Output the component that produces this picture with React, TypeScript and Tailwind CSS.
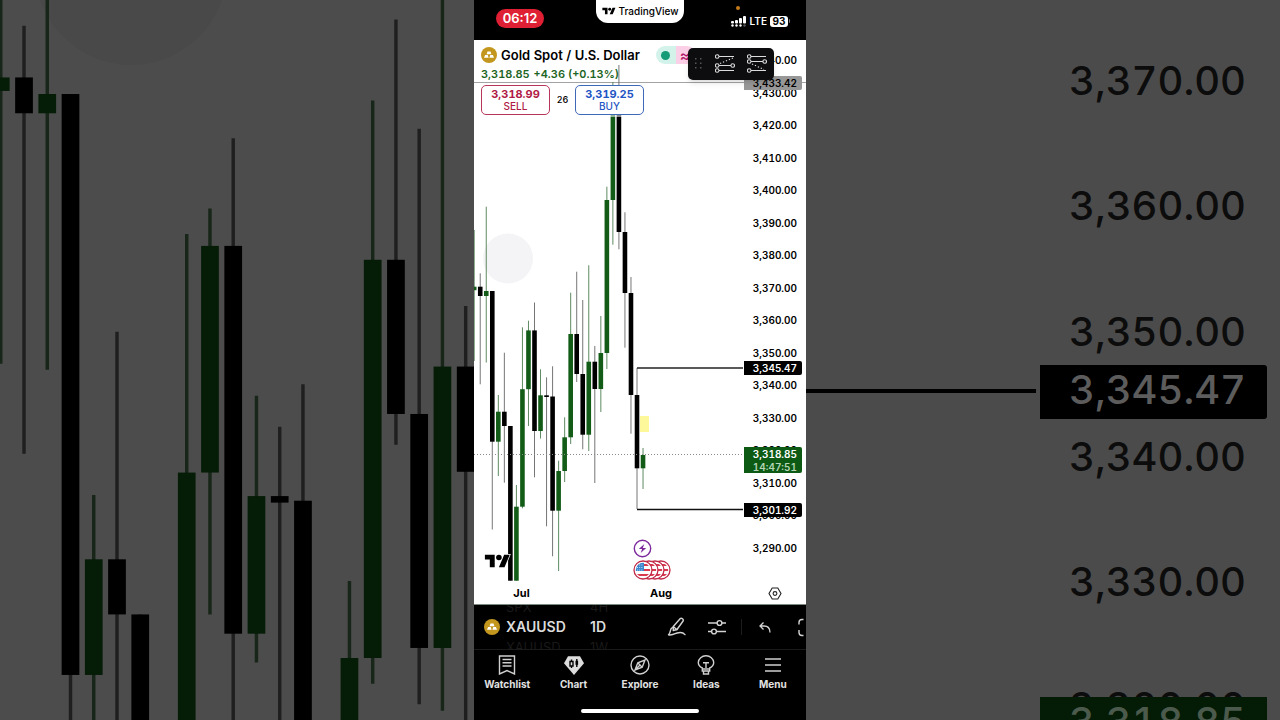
import React from "react";

type Candle = { up: boolean; high: number; top: number; bottom: number; low: number };

const c = (up: boolean, high: number, top: number, bottom: number, low: number): Candle => ({ up, high, top, bottom, low });

const CANDLES: Candle[] = [
  c(true, 230, 286.7, 290.2, 361),
  c(false, 273.3, 286.7, 296, 384.3),
  c(true, 206.7, 291, 296, 362.5),
  c(false, 291, 291, 441.7, 529.5),
  c(true, 395, 411.7, 441.7, 476),
  c(false, 352.7, 411.7, 426, 482.7),
  c(false, 426, 426, 580.7, 580.7),
  c(true, 485, 506.7, 580.7, 580.7),
  c(true, 327.3, 389.2, 506.7, 508.3),
  c(true, 320.7, 330.4, 389.2, 426),
  c(false, 302.5, 330.4, 431, 477.3),
  c(true, 369.3, 395.3, 431, 438.5),
  c(false, 377.3, 395.3, 397, 526.3),
  c(false, 366.3, 396.5, 510.7, 556.3),
  c(true, 460.7, 471, 510.7, 571),
  c(true, 417.3, 437.3, 471, 482),
  c(true, 292.7, 334, 437.3, 444),
  c(false, 271.7, 334, 374, 382),
  c(false, 300, 374, 434.7, 449.3),
  c(true, 265.3, 361.7, 434.7, 451),
  c(false, 346, 361.7, 389, 483),
  c(true, 316, 353, 389, 412),
  c(true, 186.7, 200, 353, 369),
  c(true, 82, 112, 200, 244.7),
  c(false, 65, 112, 232, 249.3),
  c(false, 212.3, 232, 293, 347.7),
  c(false, 277, 293, 395, 433.7),
  c(false, 368, 395, 468.3, 509),
  c(true, 448, 455, 468.3, 489),
];

const PRICES = [
  "3,440.00", "3,430.00", "3,420.00", "3,410.00", "3,400.00", "3,390.00", "3,380.00", "3,370.00",
  "3,360.00", "3,350.00", "3,340.00", "3,330.00", "3,320.00", "3,310.00", "3,300.00", "3,290.00",
];

function Candles() {
  return (
    <g>
      <circle cx="508" cy="258.5" r="25" fill="#f4f3f6" />
      {CANDLES.map((k, i) => {
        const x = 474.2 + i * 6.03;
        return (
          <g key={i}>
            <line x1={x} x2={x} y1={k.high} y2={k.low} stroke={k.up ? "#4c7d4f" : "#666"} strokeWidth="0.9" />
            <rect x={x - 2.3} y={k.top} width="4.6" height={k.bottom - k.top} fill={k.up ? "#125c17" : "#000"} />
          </g>
        );
      })}
      <rect x="640" y="416" width="9" height="16" fill="#fdf89a" />
    </g>
  );
}

function Backdrop({ side, children }: { side: "left" | "right"; children?: React.ReactNode }) {
  return (
    <div aria-hidden="true" className="grid h-screen min-w-0 flex-1 overflow-hidden bg-[#4b4b4b] [grid-template:100%/100%]">
      {side === "left" ? (
        <svg className="[grid-area:1/1] h-full w-full brightness-[0.3] bg-white" viewBox="474 266.6 122.96 186.8" preserveAspectRatio="xMinYMid slice">
          <Candles />
        </svg>
      ) : (
        children
      )}
    </div>
  );
}

function TVMark({ className, outline = false }: { className: string; outline?: boolean }) {
  return (
    <svg className={className} viewBox="-1 3 38 20" fill="#000" stroke={outline ? "#fff" : "none"} strokeWidth={outline ? 2 : 0} paintOrder="stroke">
      <path d="M14 22H7V11H0V4h14v18zM28 22h-8l7.5-18h8L28 22z" />
      <circle cx="20" cy="8" r="4" />
    </svg>
  );
}

function Coin({ className }: { className: string }) {
  return (
    <svg className={className} viewBox="0 0 18 18">
      <circle cx="9" cy="9" r="9" fill="#c3961d" />
      <g fill="#fff">
        <path d="M7.3 5.2h3.4l1 3H6.3z" />
        <path d="M4.6 9h3l1 3.2H3.4z" />
        <path d="M10.4 9h3l1.2 3.2H9.400z" />
      </g>
    </svg>
  );
}

function StatusBar() {
  return (
    <header className="grid h-10 grid-cols-[1fr_88px_1fr] bg-black text-white">
      <div className="flex items-start pl-[22px] pt-[9px]">
        <span className="flex h-[19px] w-12 items-center justify-center rounded-full bg-[#df1f33] text-[13px] font-semibold">06:12</span>
      </div>
      <div className="flex h-[23px] items-center justify-center gap-[3px] rounded-b-xl bg-white pb-[2px] text-black">
        <TVMark className="h-[8px] w-[14px]" />
        <span className="text-[10px] font-medium leading-4">TradingView</span>
      </div>
      <div className="flex flex-col pr-[16px] pt-[6px]">
        <span className="ml-[52px] h-1 w-1 rounded-full bg-[#c47a1c]" />
        <div className="flex items-center justify-end gap-[3px] pt-[4px]">
          <svg className="h-[11px] w-4" viewBox="0 0 16 11" fill="#fff">
            <rect x="0" y="5" width="3" height="2.4" rx="1" />
            <rect x="4" y="4" width="3" height="3.4" rx="1" />
            <rect x="8" y="2" width="3" height="5.4" rx="1" />
            <rect x="12" y="0" width="3" height="7.4" rx="1" />
            <circle cx="1.5" cy="9.5" r="1.2" />
            <circle cx="5.5" cy="9.5" r="1.2" />
            <circle cx="9.5" cy="9.5" r="1.2" />
            <circle cx="13.5" cy="9.5" r="1.2" fill="#555" />
          </svg>
          <span className="text-[10px] font-semibold leading-[14px]">LTE</span>
          <span className="flex items-center gap-px">
            <span className="flex h-[11px] w-[18px] items-center justify-center rounded-[3px] bg-white text-[10px] font-bold leading-none text-black">93</span>
            <span className="h-1 w-px rounded-r bg-[#777]" />
          </span>
        </div>
      </div>
    </header>
  );
}

function Flag({ cx, first }: { cx: number; first?: boolean }) {
  return (
    <g transform={`translate(${cx} 10)`}>
      <circle r="9" fill="#fff" stroke="#c22a48" strokeWidth="1.3" />
      <clipPath id={`flag${cx}`}><circle r="7.2" /></clipPath>
      <g clipPath={`url(#flag${cx})`}>
        <path d="M-8-5H8M-8 0H8M-8 5H8" stroke="#d93a50" strokeWidth="2.2" />
        {first && <rect x="-8" y="-8" width="9" height="9" fill="#3a86cf" />}
        {first && <path d="M-6-5h6M-6-2.5h6M-6 0h6" stroke="#d6e9fb" strokeWidth="0.9" strokeDasharray="1 1.2" />}
      </g>
    </g>
  );
}

function Tag({ className, children }: { className: string; children: React.ReactNode }) {
  return (
    <div className={"absolute left-0 right-1 rounded-r-[2px] pr-[5px] text-right text-[10px] font-semibold leading-[14px] " + className}>{children}</div>
  );
}

function DrawTool({ flip, label }: { flip?: boolean; label: string }) {
  return (
    <button type="button" aria-label={label} className="flex h-5 w-5 items-center justify-center">
      <svg className="h-5 w-5" viewBox="0 0 20 20" fill="none" stroke="#dcdcdc" strokeWidth="1.1">
        {flip ? (
          <>
            <path d="M4 2.500H19M4 7.500H16M4 16.500H19" />
            <path d="M5 10l12 5.500" strokeDasharray="1.3 1.9" />
            <circle cx="2.2" cy="2.500" r="1.8" />
            <circle cx="2.2" cy="7.500" r="1.8" />
            <circle cx="17.7" cy="7.500" r="1.8" />
            <circle cx="2.2" cy="16.500" r="1.8" />
          </>
        ) : (
          <>
            <path d="M4 2.500H19M4 11.500H16M4 16.500H19" />
            <path d="M5 9.500L18 4" strokeDasharray="1.3 1.9" />
            <circle cx="2.2" cy="2.500" r="1.8" />
            <circle cx="2.2" cy="11.500" r="1.8" />
            <circle cx="17.7" cy="11.500" r="1.8" />
            <circle cx="2.2" cy="16.500" r="1.8" />
          </>
        )}
      </svg>
    </button>
  );
}

function ChartPane() {
  return (
    <section className="relative grid min-h-0 flex-1 overflow-hidden border-b border-[#7d8a80] bg-white tabular-nums text-black [grid-template:100%/100%]">
      <svg className="[grid-area:1/1] h-full w-full" viewBox="474 40 332 564" preserveAspectRatio="xMinYMin meet">
        <line x1="474" x2="806" y1="82.5" y2="82.5" stroke="#a3a3a3" />
        <Candles />
        <rect x="610" y="114" width="12" height="3" fill="#fff" opacity="0.55" />
        <line x1="474" x2="743" y1="454.5" y2="454.5" stroke="#8a8a8a" strokeDasharray="1 2" />
        <line x1="637" x2="743" y1="368" y2="368" stroke="#222" strokeWidth="1.5" />
        <line x1="637" x2="743" y1="509.5" y2="509.5" stroke="#111" strokeWidth="1.5" />
      </svg>

      <div className="[grid-area:1/1] z-10 flex flex-col justify-between">
        <div className="flex flex-col items-start pl-[7px] pt-[6px]">
          <div className="flex h-[18px] items-center">
            <Coin className="h-4 w-4" />
            <h1 className="ml-[4px] whitespace-nowrap text-[13px] font-semibold leading-[18px]">Gold Spot / U.S. Dollar</h1>
            <span className="ml-4 flex h-[18px] overflow-hidden rounded-full">
              <span className="flex w-5 items-center justify-center bg-[#d3f2ea]"><span className="h-[9px] w-[9px] rounded-full bg-[#159c76]" /></span>
              <span className="flex w-5 items-center bg-[#fbcfe5] pl-1 text-[15px] font-semibold leading-none text-[#b0176a]">≈</span>
            </span>
          </div>
          <p className="mt-[2px] text-[11px] font-semibold leading-4 text-[#1c6423]">
            <span>3,318.85</span> <span className="ml-px">+4.36 (+0.13%)</span>
          </p>
          <div className="mt-[3px] flex items-center text-[11px]">
            <button type="button" className="flex h-[30px] w-[69px] flex-col items-center justify-center rounded-[5px] border border-[#b8365a] bg-white text-[#b01a45]">
              <span className="font-bold leading-3">3,318.99</span>
              <span className="text-[10px] font-medium leading-3">SELL</span>
            </button>
            <span className="w-[25px] text-center text-[9px] font-medium">26</span>
            <button type="button" className="flex h-[30px] w-[69px] flex-col items-center justify-center rounded-[5px] border border-[#3e68b8] bg-white text-[#1f55c4]">
              <span className="font-bold leading-3">3,319.25</span>
              <span className="text-[10px] font-medium leading-3">BUY</span>
            </button>
          </div>
        </div>

        <div className="flex flex-col pl-[10px]">
          <div className="flex items-end">
            <TVMark className="mb-[12px] h-[14px] w-[27px]" outline />
            <div className="ml-[122px] flex flex-col gap-[2px]">
              <svg className="h-[19px] w-[19px]" viewBox="0 0 19 19">
                <circle cx="9.5" cy="9.5" r="8.2" fill="#fff" stroke="#7d2a9c" strokeWidth="1.4" />
                <path d="M11.3 5L5.8 10h3.3L7.7 14l5.5-5H9.8z" fill="#7d2a9c" />
              </svg>
              <svg className="h-5 w-[38px]" viewBox="0 0 38 20">
                <Flag cx={28} />
                <Flag cx={22} />
                <Flag cx={16} />
                <Flag cx={10} first />
              </svg>
            </div>
          </div>
          <div className="flex h-6 items-center pt-[2px] text-[11px] font-bold leading-4">
            <span className="w-[75px] text-center">Jul</span>
            <span className="ml-[64px] w-[76px] text-center">Aug</span>
            <button type="button" aria-label="Chart settings" className="ml-[69px]">
              <svg className="h-[13px] w-[14px]" viewBox="0 0 14 13" fill="none" stroke="#222" strokeWidth="1.1">
                <path d="M4.2 1h5.6L13 6.5 9.8 12H4.2L1 6.5z" />
                <circle cx="7" cy="6.5" r="1.9" />
              </svg>
            </button>
          </div>
        </div>
      </div>

      <div className="relative [grid-area:1/1] h-[516px] w-[62px] justify-self-end pt-3">
        <ul className="flex h-full flex-col justify-between pr-[9px] text-right text-[10px] font-semibold leading-4">
          {PRICES.map((p) => <li key={p}>{p}</li>)}
        </ul>
        <Tag className="top-9 bg-[#979797] text-black">3,433.42</Tag>
        <Tag className="top-[321px] bg-black text-white">3,345.47</Tag>
        <Tag className="top-[407px] bg-[#0d5a14] text-white">
          <div className="leading-[14px]">3,318.85</div>
          <div className="leading-3 text-[#b4d6b6]">14:47:51</div>
        </Tag>
        <Tag className="top-[463px] bg-black text-white">3,301.92</Tag>
      </div>

      <div className="absolute right-8 top-2 z-20 flex h-8 w-[86px] items-center rounded-[5px] bg-[#0d0d10] pl-[7px] shadow-md">
        <svg className="h-3 w-2" viewBox="0 0 8 12" fill="#55555a">
          <path d="M0 0h1.5v1.5H0zM5 0h1.5v1.5H5zM0 4.5h1.5V6H0zM5 4.5h1.5V6H5zM0 9h1.5v1.5H0zM5 9h1.5v1.5H5z" />
        </svg>
        <div className="ml-3 flex gap-3">
          <DrawTool label="Long position" />
          <DrawTool label="Short position" flip />
        </div>
      </div>
    </section>
  );
}

function Wheel({ items, className }: { items: string[]; className: string }) {
  return (
    <div className={"flex h-11 flex-col items-start justify-center overflow-hidden " + className}>
      <span className="shrink-0 text-[13px] leading-5 text-[#191919]">{items[0]}</span>
      <button type="button" className="shrink-0 text-[14px] font-semibold leading-5 text-[#dcdcdc]">{items[1]}</button>
      <span className="shrink-0 text-[13px] leading-5 text-[#191919]">{items[2]}</span>
    </div>
  );
}

function Toolbar() {
  return (
    <div className="flex h-[45px] items-center overflow-hidden border-b border-[#1a1a1a] bg-black pl-[10px]">
      <Coin className="h-4 w-4 shrink-0" />
      <Wheel items={["SPX", "XAUUSD", "XAUUSD"]} className="ml-[6px] w-[84px] shrink-0" />
      <Wheel items={["4H", "1D", "1W"]} className="w-[77px] shrink-0" />
      <button type="button" aria-label="Draw" className="shrink-0">
        <svg className="h-5 w-5" viewBox="0 0 20 20" fill="none" stroke="#d4d4d4" strokeWidth="1.4" strokeLinecap="round" strokeLinejoin="round">
          <path d="M6.5 9.2L13.300 1.500c1.200-1 3.700 1 2.800 2.500L10 12.500l-3.800 1z" />
          <path d="M6.200 9.500l3.600 3M5.800 10.500C2 11.500 4.800 14.500 1.500 17.800c3.500.8 7-1.300 8.500-1.800 2.500-.8 6-.8 8 1.600" />
        </svg>
      </button>
      <button type="button" aria-label="Indicators" className="ml-5 shrink-0">
        <svg className="h-5 w-5" viewBox="0 0 20 20" fill="none" stroke="#d4d4d4" strokeWidth="1.400">
          <path d="M1 6h9M15 6h4M1 14.500h3.500M9.500 14.500H19" />
          <circle cx="12.500" cy="6" r="2.400" />
          <circle cx="7" cy="14.500" r="2.400" />
        </svg>
      </button>
      <span className="ml-[14px] h-4 w-px shrink-0 bg-[#1d1d1d]" />
      <button type="button" aria-label="Undo" className="ml-[15px] shrink-0">
        <svg className="h-5 w-4" viewBox="0 0 16 20" fill="none" stroke="#d4d4d4" strokeWidth="1.300">
          <path d="M6.500 5.500L3 9 6.500 12.500M3 9h4c4 0 6 2 6 6.500" />
        </svg>
      </button>
      <button type="button" aria-label="Fullscreen" className="ml-6 shrink-0">
        <svg className="h-5 w-5" viewBox="0 0 20 20" fill="none" stroke="#d4d4d4" strokeWidth="1.400">
          <path d="M6.500 2.500H5a3 3 0 0 0-3 3V7.500M2 13V15.500a3 3 0 0 0 3 3h1.500" />
        </svg>
      </button>
    </div>
  );
}

const NAV: { label: string; icon: React.ReactNode }[] = [
  {
    label: "Watchlist",
    icon: <path d="M2.500 1h15v18L10 15.500 2.500 19zM5.500 4.500h9M5.500 7.700h9M5.500 11h9" />,
  },
  {
    label: "Chart",
    icon: (
      <>
        <path d="M4 1.200h12l4 7L10 20 0 8.200z" fill="#dcdcdc" stroke="none" />
        <path d="M7.500 4.500v2M7.500 11v2M6 6.500h3V11H6z" stroke="#000" />
        <path d="M12.800 4v8" stroke="#000" />
        <path d="M11.500 5.800h2.600v4h-2.600z" fill="#000" stroke="none" />
      </>
    ),
  },
  {
    label: "Explore",
    icon: (
      <>
        <circle cx="10" cy="10" r="9" />
        <path d="M15 5l-2.800 7.200L5 15l2.800-7.200zM7.800 7.800l4.400 4.400M10.500 9.500L5 15" />
      </>
    ),
  },
  {
    label: "Ideas",
    icon: (
      <path d="M6.300 14V13C3.500 11.700 2.300 9.700 2.300 7.500A7.500 7 0 0 1 10 .800a7.500 7 0 0 1 7.700 6.700c0 2.200-1.200 4.200-4 5.500V16H6.300zM6.300 14h7.400M7.500 16v3h5V16M7 7.800h6M10 7.800V13" />
    ),
  },
  { label: "Menu", icon: <path d="M2 4h16M2 10h16M2 16h16" /> },
];

function BottomNav() {
  return (
    <nav className="flex h-[70px] flex-col items-center justify-between bg-black pb-[7px] pt-[5px]">
      <ul className="grid w-full grid-cols-5">
        {NAV.map((n) => (
          <li key={n.label}>
            <a href={"#" + n.label.toLowerCase()} className="flex flex-col items-center gap-[2px] text-[10px] font-bold leading-[14px] text-[#e2e2e2]">
              <svg className="h-5 w-5" viewBox="0 0 20 20" fill="none" stroke="#d0d0d0" strokeWidth="1.400">{n.icon}</svg>
              {n.label}
            </a>
          </li>
        ))}
      </ul>
      <span className="h-1 w-[118px] rounded-full bg-white" />
    </nav>
  );
}

export default function App() {
  return (
    <div className="flex h-screen overflow-hidden bg-[#4b4b4b] font-['Inter','Liberation_Sans',sans-serif]">
      <Backdrop side="left" />
      <main className="flex w-[332px] shrink-0 flex-col bg-black">
        <StatusBar />
        <ChartPane />
        <Toolbar />
        <BottomNav />
      </main>
      <Backdrop side="right">
        <div className="relative [grid-area:1/1] flex items-start justify-end">
          <div className="mt-[389px] h-1 flex-1 bg-black" />
          <div className="relative ml-1 h-full w-[240px] text-right text-[40px] font-medium tabular-nums leading-[50px] text-[#0c0c0c]">
            <ul className="flex h-[607px] flex-col justify-between pr-[34px] pt-[56px]">
              {["3,370.00", "3,360.00", "3,350.00", "3,340.00", "3,330.00"].map((p) => (
                <li key={p}>{p}</li>
              ))}
            </ul>
            <div className="absolute left-0 right-[13px] top-[365px] h-[54px] rounded-r-[3px] bg-black pr-[21px] text-[#5c5c5c]">3,345.47</div>
            <div className="absolute right-[34px] top-[682px]">3,320.00</div>
            <div className="absolute left-0 right-[13px] top-[697px] h-[102px] bg-[#041b06] pr-[21px] text-[#4b5a4c]">3,318.85</div>
          </div>
        </div>
      </Backdrop>
    </div>
  );
}
